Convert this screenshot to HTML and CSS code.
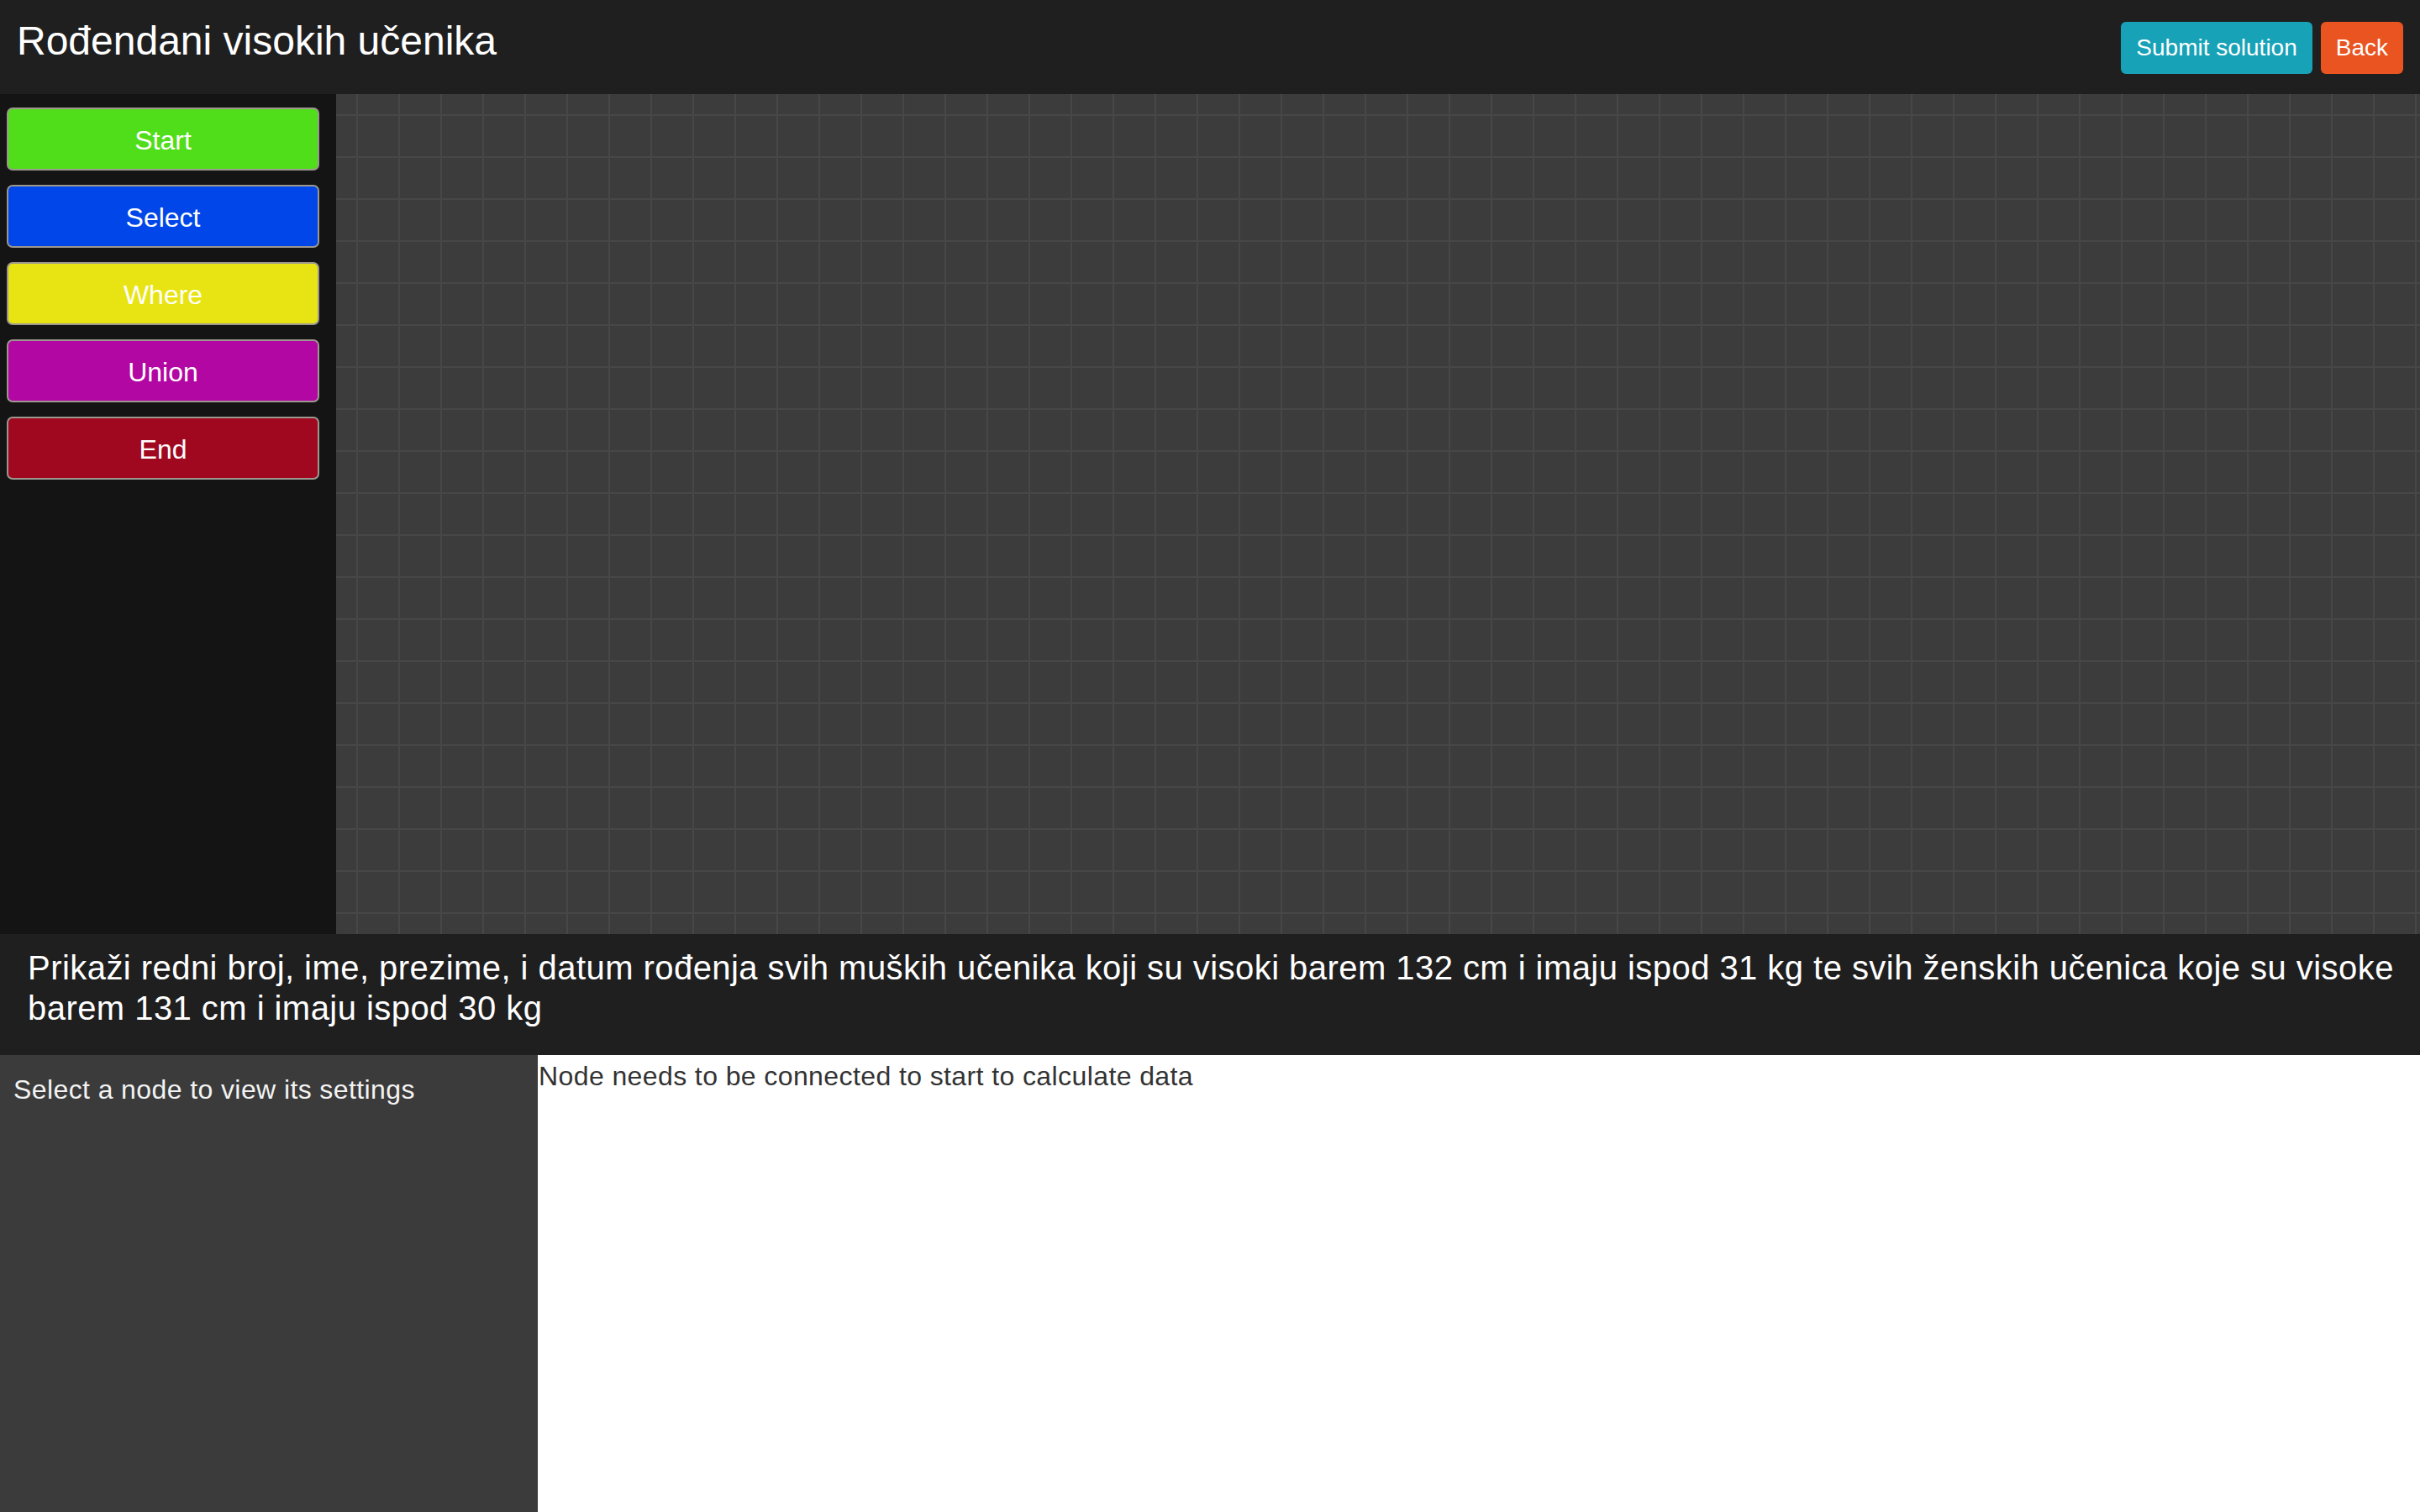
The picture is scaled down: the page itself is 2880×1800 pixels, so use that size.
FILE: index.html
```html
<!DOCTYPE html>
<html lang="hr">
<head>
<meta charset="utf-8">
<title>Rođendani visokih učenika</title>
<link rel="stylesheet" href="styles.css">
</head>
<body>
<div class="app">
  <header class="topbar">
    <h1 class="title">Rođendani visokih učenika</h1>
    <div class="actions">
      <button class="btn btn-info">Submit solution</button>
      <button class="btn btn-back">Back</button>
    </div>
  </header>
  <div class="workspace">
    <aside class="palette">
      <button class="node-btn node-start">Start</button>
      <button class="node-btn node-select">Select</button>
      <button class="node-btn node-where">Where</button>
      <button class="node-btn node-union">Union</button>
      <button class="node-btn node-end">End</button>
    </aside>
    <main class="canvas"></main>
  </div>
  <section class="task">
    <p class="task-text">Prikaži redni broj, ime, prezime, i datum rođenja svih muških učenika koji su visoki barem 132 cm i imaju ispod 31 kg te svih ženskih učenica koje su visoke barem 131 cm i imaju ispod 30 kg</p>
  </section>
  <section class="bottom">
    <div class="settings">Select a node to view its settings</div>
    <div class="output">Node needs to be connected to start to calculate data</div>
  </section>
</div>
</body>
</html>
```
FILE: styles.css
```css
* { box-sizing: border-box; }
html, body { margin: 0; padding: 0; }
body {
  font-family: "Liberation Sans", Arial, Helvetica, sans-serif;
  background: #ffffff;
  color: #ffffff;
  width: 2880px;
  height: 1800px;
  overflow: hidden;
}
.app {
  display: flex;
  flex-direction: column;
  height: 1800px;
}
.topbar {
  height: 112px;
  flex: 0 0 112px;
  background: #1f1f1f;
  display: flex;
  justify-content: space-between;
  align-items: flex-start;
  padding: 0 20px;
}
.title {
  margin: 20px 0 0 0;
  font-size: 48px;
  line-height: 58px;
  font-weight: 400;
  color: #ffffff;
}
.actions {
  display: flex;
  gap: 10px;
  margin-top: 26px;
}
.btn {
  font-family: inherit;
  height: 62px;
  padding: 0 18px;
  font-size: 28px;
  color: #ffffff;
  border: none;
  border-radius: 6px;
  cursor: pointer;
}
.btn-info { background: #17a2b8; }
.btn-back { background: #e95420; }
.workspace {
  display: flex;
  height: 1000px;
  flex: 0 0 1000px;
}
.palette {
  width: 400px;
  flex: 0 0 400px;
  background: #141414;
  padding: 16px 20px 0 8px;
  display: flex;
  flex-direction: column;
  gap: 17px;
}
.node-btn {
  font-family: inherit;
  height: 75px;
  width: 372px;
  padding: 3px 0 0 0;
  font-size: 32px;
  color: #ffffff;
  border: 2px solid #9c978f;
  border-radius: 7px;
  cursor: pointer;
}
.node-start { background: #50dd1a; }
.node-select { background: #0146e8; }
.node-where { background: #e8e413; }
.node-union { background: #b307a3; }
.node-end { background: #a00820; }
.canvas {
  flex: 1;
  background-color: #3c3c3c;
  background-image:
    linear-gradient(to right, #474747 2px, transparent 2px),
    linear-gradient(to bottom, #474747 2px, transparent 2px);
  background-size: 50px 50px;
  background-position: 24px 24px;
}
.task {
  flex: 0 0 144px;
  height: 144px;
  background: #1f1f1f;
  padding: 16px 20px 0 33px;
}
.task-text {
  margin: 0;
  font-size: 40px;
  line-height: 48px;
  letter-spacing: 0.45px;
  color: #ffffff;
}
.bottom {
  flex: 1;
  display: grid;
  grid-template-columns: 640px 1fr;
}
.settings {
  background: #3b3b3b;
  padding: 17px 16px 16px 16px;
  font-size: 32px;
  line-height: 48px;
  letter-spacing: 0.4px;
  color: #f2f2f2;
}
.output {
  background: #ffffff;
  padding: 1px 0 0 1px;
  font-size: 32px;
  line-height: 48px;
  letter-spacing: 0.4px;
  color: #333333;
}
```
